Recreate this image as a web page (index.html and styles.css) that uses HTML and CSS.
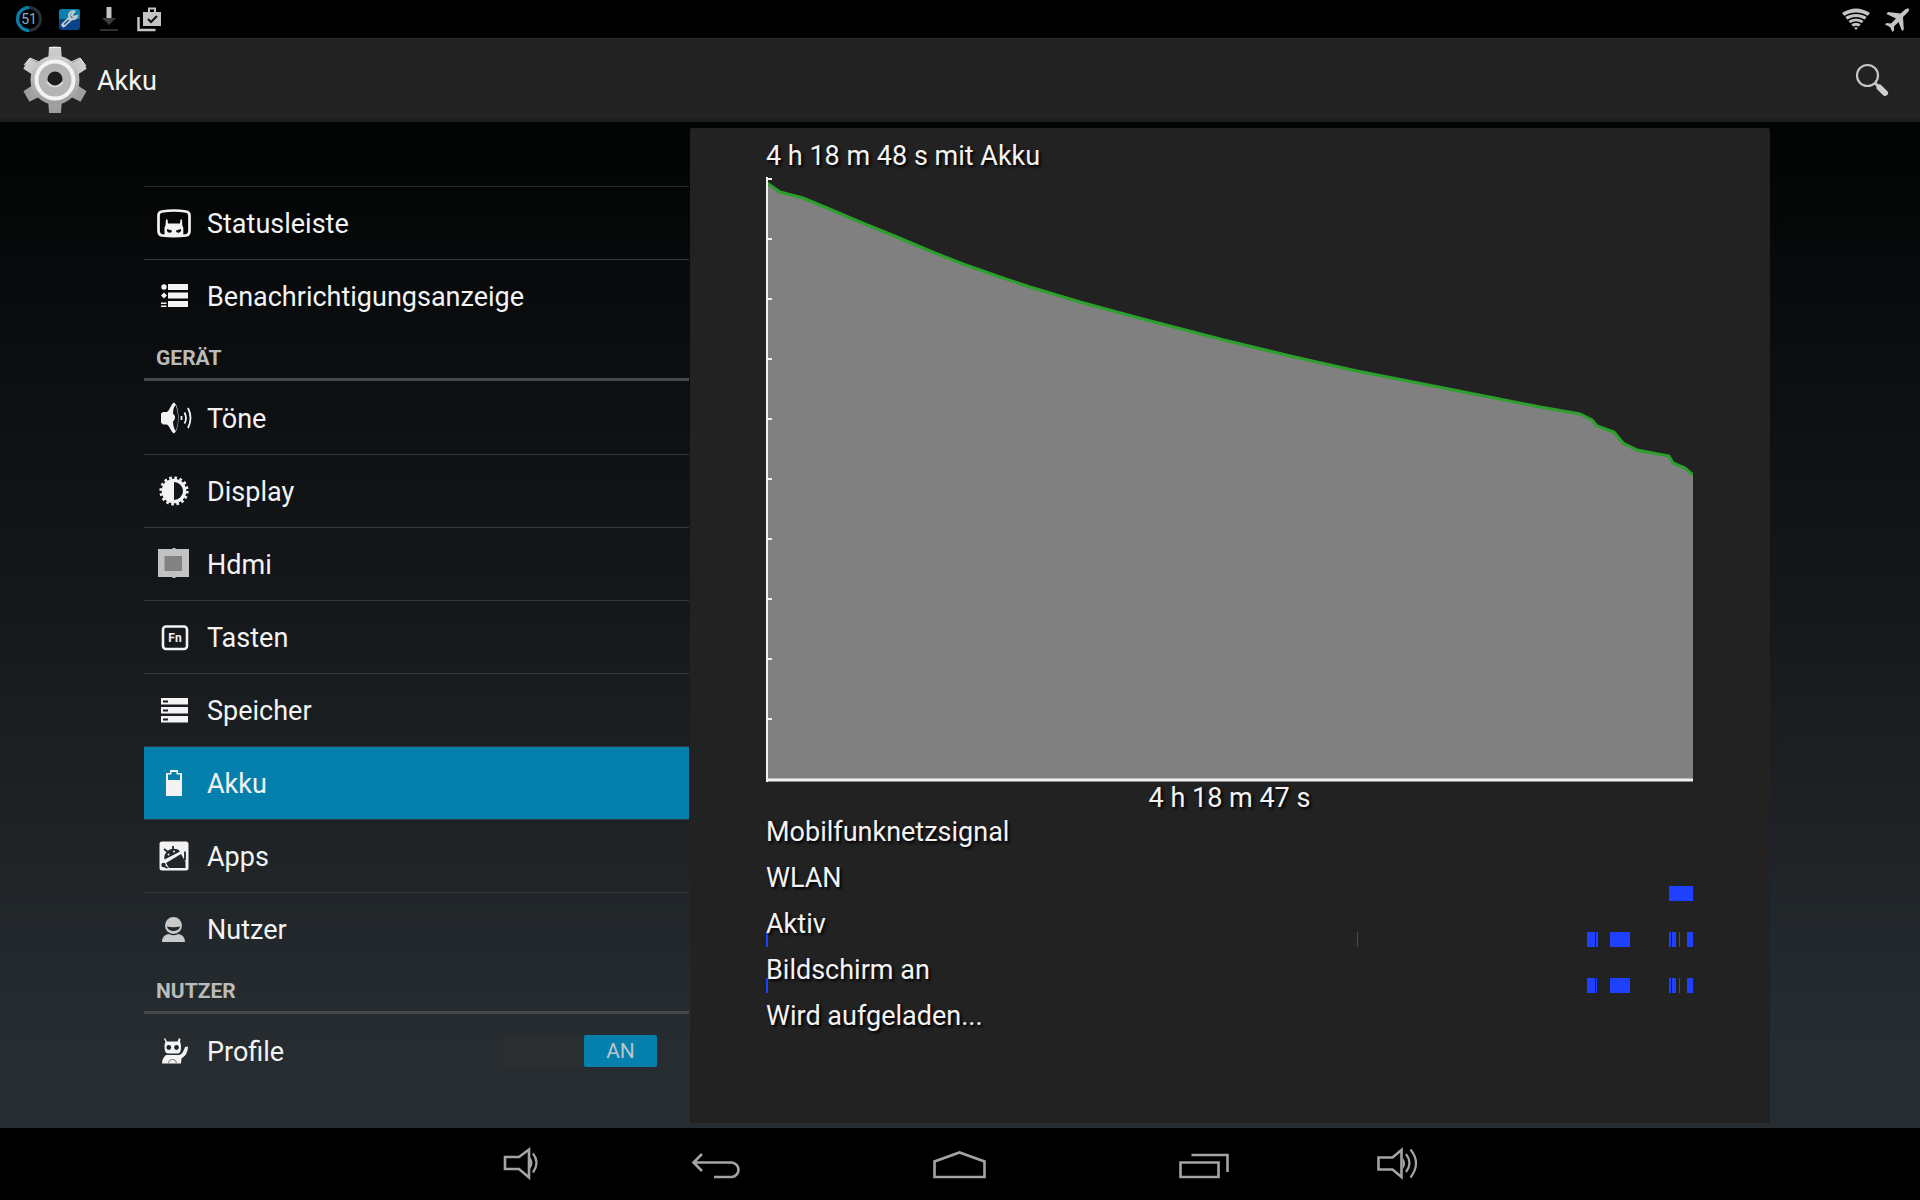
FILE: index.html
```html
<!DOCTYPE html>
<html lang="de">
<head>
<meta charset="utf-8">
<meta name="viewport" content="width=device-width, initial-scale=1">
<title>Akku</title>
<link rel="stylesheet" href="styles.css">
</head>
<body>
<div class="statusbar">
  <div class="status-group">
    <svg class="status-icon" viewBox="0 0 28 28"><circle cx="14" cy="14" r="11.500" fill="none" stroke="#2a3036" stroke-width="3"/><path d="M14 2.500A11.500 11.500 0 0 0 14 25.500" fill="none" stroke="#0580ad" stroke-width="3"/><text class="battery-level" x="14" y="19" text-anchor="middle">51</text></svg>
    <svg class="status-icon" viewBox="0 0 28 28"><rect x="4" y="4" width="21" height="21" rx="3" fill="#07448a"/><path d="M4 14V7a3 3 0 0 1 3-3h15a3 3 0 0 1 3 3v7z" fill="#0a80ae"/><path d="M8.500 20l8-7.500" stroke="#c8c8c8" stroke-width="4.500" stroke-linecap="round"/><path d="M19.500 6.500a4 4 0 1 0 2.500 4.500l-3.500 1-2-2z" fill="#0a80ae" stroke="#c8c8c8" stroke-width="2"/><path d="M9 19.500l5-4.500" stroke="#0a5a96" stroke-width="1.500"/></svg>
    <svg class="status-icon" viewBox="0 0 28 28"><path d="M11.500 2h5v11h-5z" fill="#c4c4c4"/><path d="M7 13h14l-7 7z" fill="#3a3d40"/><path d="M5 24h18v2H5z" fill="#2d3032"/></svg>
    <svg class="status-icon" viewBox="0 0 28 28"><path d="M3.500 12v13h17" fill="none" stroke="#c4c4c4" stroke-width="2.500"/><path d="M8 7h18v14H8z" fill="#c4c4c4"/><path d="M14 7V3.500h6V7" fill="none" stroke="#c4c4c4" stroke-width="2"/><path d="M13 14l3 3 6-6" fill="none" stroke="#111" stroke-width="2"/></svg>
  </div>
  <div class="status-group status-group-end">
    <svg class="status-icon" viewBox="0 0 28 28"><path d="M14 25L0 8Q14-1 28 8z" fill="#c4c4c4"/><path d="M1 12.500Q14 4 27 12.500M4 16.500Q14 9 24 16.500M7 20Q14 14 21 20M10 23Q14 20 18 23" fill="none" stroke="#000" stroke-width="1.500"/></svg>
    <svg class="status-icon" viewBox="0 0 28 28"><path d="M25 4c-1.500-1-3.500 0-5 1.500l-3.500 3L4 7 2.500 9l9.500 4.500-5 5-4.500-.5L1 19.500l5 2.500 2.500 5 1.500-1.500v-4l4.500-4.500L18 26l1.800-1.500L19 12l4-4c1.500-1.500 2.500-3 2-4z" fill="#c4c4c4"/></svg>
  </div>
</div>

<header class="actionbar">
  <svg class="gear" viewBox="0 0 66 68" aria-hidden="true">
    <defs><linearGradient id="metal" x1="0" y1="0" x2="0" y2="1"><stop offset="0" stop-color="#cfcfcf"/><stop offset="1" stop-color="#9c9c9c"/></linearGradient></defs>
    <g fill="url(#metal)">
      <path id="tooth" d="M26 16l1-15q6-1 12 0l1 15v36l-1 15H27l-1-15z"/>
      <use href="#tooth" transform="rotate(60 33 34)"/>
      <use href="#tooth" transform="rotate(-60 33 34)"/>
      <circle cx="33" cy="34" r="24.500"/>
    </g>
    <path d="M27 1.500h12M2 19l6-7 9 4M49 16l9-4 6 8" fill="none" stroke="#f2f2f2"/>
    <circle cx="33" cy="34" r="18.500" fill="#b4b4b4" stroke="#f3f3f3" stroke-width="4"/>
    <circle cx="33" cy="33" r="7.500" fill="#1d1d1d"/><path d="M25 36q8 9 16 0" fill="none" stroke="#d8d8d8" stroke-width="2"/>
  </svg>
  <h1 class="title">Akku</h1>
  <button class="search" type="button" aria-label="Suchen">
    <svg class="search-icon" viewBox="0 0 36 36"><circle cx="13.500" cy="13.500" r="10.500" fill="none" stroke="#c6c6c6" stroke-width="2.200"/><path d="M21 21l5 5" stroke="#c6c6c6" stroke-width="3"/><path d="M25.500 25.500l5.500 5.500" stroke="#cecece" stroke-width="6" stroke-linecap="round"/></svg>
  </button>
</header>

<main class="content">
  <nav class="sidebar" aria-label="Einstellungen">
    <ul class="menu menu-first">
      <li><a class="item" href="#statusleiste"><svg class="icon" viewBox="0 0 36 36"><path d="M6 6.500q12-2 24 0 3.500.5 3.500 4v15.500q0 4-3.500 4.500-12 1.500-24 0-3.500-.5-3.500-4.500V10.500q0-3.500 3.500-4z" fill="none" stroke="#f3f3f3" stroke-width="2.700"/><path d="M10 14.500h1.500l.5 4h12l.5-4H26l.3 6 1 2V32H8.500v-9.500l1-2z" fill="#f3f3f3"/><path d="M11 24l5 1.500c0 3-4.500 3-5 0zM25 24l-5 1.500c0 3 4.500 3 5 0z" fill="#0a0b0d"/></svg>Statusleiste</a></li>
      <li><a class="item" href="#benachrichtigungsanzeige"><svg class="icon" viewBox="0 0 36 36"><path d="M12 6h20v6H12zM12 14.500h20v6H12zM12 23h20v6H12zM5 24.500h5.500V26H5zM5 27.500h5.500V29H5zM8 14.500l3 3-3 3-3-3z" fill="#f3f3f3"/><circle cx="8" cy="9" r="2.700" fill="#f3f3f3"/></svg>Benachrichtigungsanzeige</a></li>
    </ul>
    <h2 class="section">GERÄT</h2>
    <ul class="menu">
      <li><a class="item" href="#toene"><svg class="icon" viewBox="0 0 36 36"><path d="M5 13.500l2-1.500h4c3-2 4-8 7-9.500 6 4 6 27 0 31-3-1.500-4-7-7-9H7l-2-2z" fill="#f3f3f3"/><path d="M19.500 5c3.500 7 3.500 20 0 26-2-3-2.500-7-2.500-9.500q4-4 0-8c0-3 .5-6 2.500-8.500z" fill="#111417"/><path d="M25.500 16v4M28.500 12.500q3 6 0 11M32 8q5 10 0 20" fill="none" stroke="#f3f3f3" stroke-width="1.800"/></svg>Töne</a></li>
      <li><a class="item" href="#display"><svg class="icon" viewBox="0 0 36 36"><circle cx="18" cy="18" r="12.300" fill="#f3f3f3"/><circle cx="18" cy="18" r="13.200" fill="none" stroke="#f3f3f3" stroke-width="2.800" stroke-dasharray="2.600 2.584"/><path d="M18 9a9 9 0 0 1 0 18z" fill="#13171a"/></svg>Display</a></li>
      <li><a class="item" href="#hdmi"><svg class="icon" viewBox="0 0 36 36"><path d="M2 3h31v28H2zM16.500 2h3v30h-3z" fill="#c2c2c2"/><path d="M8.500 10H26v15H8.500z" fill="#828282"/></svg>Hdmi</a></li>
      <li><a class="item" href="#tasten"><svg class="icon" viewBox="0 0 36 36"><rect x="7" y="7.500" width="24" height="22.500" rx="3" fill="none" stroke="#f3f3f3" stroke-width="2.600"/><text class="fn" x="19" y="23" text-anchor="middle">Fn</text></svg>Tasten</a></li>
      <li><a class="item" href="#speicher"><svg class="icon" viewBox="0 0 36 36"><path d="M5 6h27v6.500H5zM5 15h27v6.500H5zM5 24h27v6.500H5z" fill="#f3f3f3"/><path d="M7 9.500h5M7 18.500h5M7 27.500h5" stroke="#1a1e21" stroke-width="1.800"/></svg>Speicher</a></li>
      <li><a class="item item-active" href="#akku" aria-current="page"><svg class="icon" viewBox="0 0 36 36"><path d="M10 31V8h4V5h8v3h4v23z" fill="#f3f3f3"/><path d="M12 15V9.500h3.500V7h5v2.500H24V15z" fill="#0580ad"/></svg>Akku</a></li>
      <li><a class="item" href="#apps"><svg class="icon" viewBox="0 0 36 36"><rect x="3.500" y="3.500" width="29" height="29" rx="2.500" fill="#f3f3f3"/><path d="M8.500 21.500C7 14 15 8.500 22 11.500l2 2zM10 25L25 16l4.500 8v6H13z" fill="#20262a"/><path d="M17 11V8M12 14l-4-3M29 13.500v9" stroke="#20262a" stroke-width="1.800"/><circle cx="7.500" cy="27" r="2.200" fill="#20262a"/><path d="M8 28l3.500 2" stroke="#20262a" stroke-width="2"/><circle cx="12.500" cy="16.500" r="1" fill="#f3f3f3"/><circle cx="18" cy="13.500" r="1" fill="#f3f3f3"/></svg>Apps</a></li>
      <li><a class="item" href="#nutzer"><svg class="icon" viewBox="0 0 36 36"><circle cx="17.500" cy="14.500" r="8.500" fill="#c9c9c9"/><path d="M11 15.500q6.500 1.500 13 0c-1 6-12 6-13 0z" fill="#22282c"/><path d="M6 31c0-5 3-7.500 7-8q4.500 2.500 9 0c4 .5 7 3 7 8z" fill="#c9c9c9"/></svg>Nutzer</a></li>
    </ul>
    <h2 class="section">NUTZER</h2>
    <ul class="menu">
      <li class="switch-row"><a class="item" href="#profile"><svg class="icon" viewBox="0 0 36 36"><path d="M9 5l2 3.500h10.500L23 5l1.500 1-.5 3q1 1 1 5 0 6-3 6.500H12q-3.500 0-3.500-6.500 0-4 1-5L8 6z" fill="#f3f3f3"/><circle cx="12.800" cy="14.500" r="2.400" fill="#22272b"/><circle cx="20.500" cy="14.500" r="2.400" fill="#22272b"/><path d="M10 22h13q4-1 6-8l3-.5q0 8-6.500 12L25 30.500H6q0-5.500 4-8.500z" fill="#f3f3f3"/><path d="M12.500 30q1-3.500 4-3.500t4 3.500" fill="none" stroke="#888" stroke-width="1.200"/></svg>Profile</a>
        <label class="switch"><input class="switch-input" type="checkbox" checked aria-label="Profile"><span class="switch-thumb">AN</span></label></li>
    </ul>
  </nav>

  <section class="panel">
    <h2 class="label">4 h 18 m 48 s mit Akku</h2>
    <svg class="chart" viewBox="0 0 927 605" preserveAspectRatio="none" role="img" aria-label="Akkustand">
      <path d="M1 6L14 15 37 21 61 31 94 45 131 60 164 74 197 87 231 99 264 110 314 125 373 141 458 163 524 179 591 194 703 216 774 230 814 237 826 243 831 249 848 255 857 266 871 273 903 279 907 286 919 291 927 298V602H1z" fill="#808080"/>
      <path d="M1 6L14 15 37 21 61 31 94 45 131 60 164 74 197 87 231 99 264 110 314 125 373 141 458 163 524 179 591 194 703 216 774 230 814 237 826 243 831 249 848 255 857 266 871 273 903 279 907 286 919 291 927 298" fill="none" stroke="#2ca02c" stroke-width="3"/>
      <path d="M1 0V605M0 2H6M0 62H6M0 122H6M0 182H6M0 242H6M0 302H6M0 362H6M0 422H6M0 482H6M0 542H6" stroke="#f0f0f0" stroke-width="2"/>
      <path d="M0 603H927" stroke="#f0f0f0" stroke-width="3"/>
    </svg>
    <p class="label duration">4 h 18 m 47 s</p>
    <ul class="events">
      <li class="event"><span class="label">Mobilfunknetzsignal</span></li>
      <li class="event"><span class="label">WLAN</span><svg class="bars" viewBox="0 0 927 15" preserveAspectRatio="none"><path d="M903 0h24v15h-24z"/></svg></li>
      <li class="event"><span class="label">Aktiv</span><svg class="bars" viewBox="0 0 927 15" preserveAspectRatio="none"><path d="M0 0h2v15H0zM591 0h1v15h-1zM821 0h8v15h-8zM830 0h2v15h-2zM844 0h20v15h-20zM903 0h2v15h-2zM906 0h4v15h-4zM913 0h1v15h-1zM921 0h6v15h-6z"/></svg></li>
      <li class="event"><span class="label">Bildschirm an</span><svg class="bars" viewBox="0 0 927 15" preserveAspectRatio="none"><path d="M0 0h2v15H0zM821 0h8v15h-8zM830 0h1v15h-1zM844 0h20v15h-20zM903 0h2v15h-2zM906 0h4v15h-4zM913 0h1v15h-1zM921 0h6v15h-6z"/></svg></li>
      <li class="event"><span class="label">Wird aufgeladen...</span></li>
    </ul>
  </section>
</main>

<footer class="navbar">
  <button class="nav-button nav-volume" type="button" aria-label="Leiser"><svg class="nav-icon" viewBox="0 0 54 36"><path d="M10 11h14l10-7.500v28L24 23H10z" fill="none" stroke="#a4a4a6" stroke-width="2.600"/><path d="M35 11q5 6 0 12z" fill="#a4a4a6"/><path d="M38 7.500q7 9 0 19" fill="none" stroke="#a4a4a6" stroke-width="2.200"/></svg></button>
  <button class="nav-button" type="button" aria-label="Zurück"><svg class="nav-icon" viewBox="0 0 54 36"><path d="M5 16.500h38a7.300 7.300 0 0 1 0 14.500H25M13 8l-8.500 8.500L13 25" fill="none" stroke="#a4a4a6" stroke-width="2.600"/></svg></button>
  <button class="nav-button" type="button" aria-label="Startseite"><svg class="nav-icon" viewBox="0 0 54 36"><path d="M1.500 31V15.500L26.500 6.500l25 9V31z" fill="none" stroke="#a4a4a6" stroke-width="2.600"/></svg></button>
  <button class="nav-button" type="button" aria-label="Letzte Apps"><svg class="nav-icon" viewBox="0 0 54 36"><path d="M3.500 16.500h38V31h-38zM14.500 9h36v17" fill="none" stroke="#a4a4a6" stroke-width="2.600"/></svg></button>
  <button class="nav-button nav-volume" type="button" aria-label="Lauter"><svg class="nav-icon" viewBox="0 0 54 36"><path d="M7.500 11.500h14l9-7.500v27l-9-7.500h-14z" fill="none" stroke="#a4a4a6" stroke-width="2.600"/><path d="M32 12q4 5.500 0 11z" fill="#a4a4a6"/><path d="M35 8q7 9 0 18M39.500 3.500q11 13.500 0 28" fill="none" stroke="#a4a4a6" stroke-width="2.200"/></svg></button>
</footer>
</body>
</html>
```
FILE: styles.css
```css
* {
  box-sizing: border-box;
}

body {
  margin: 0;
  min-height: 100vh;
  display: flex;
  flex-direction: column;
  background: #000;
  color: #f3f3f3;
  font-family: Roboto, "Noto Sans", sans-serif;
  font-size: 27px;
  line-height: 32px;
}

h1,
h2,
p,
ul {
  margin: 0;
  padding: 0;
  font-size: 27px;
  font-weight: 400;
}

ul {
  list-style: none;
}

button {
  padding: 0;
  border: 0;
  background: none;
  cursor: pointer;
}

svg {
  display: block;
  flex: none;
}

/* Status bar */
.statusbar {
  display: flex;
  justify-content: space-between;
  align-items: center;
  height: 38px;
  padding: 0 8px 0 15px;
}

.status-group {
  display: flex;
  gap: 12px;
}

.status-group-end {
  gap: 14px;
}

.status-icon {
  width: 28px;
  height: 28px;
}

.battery-level {
  font-size: 14px;
  fill: #7fb4d0;
}

/* Action bar */
.actionbar {
  display: flex;
  align-items: center;
  height: 84px;
  padding: 2px 30px 0 22px;
  background: #222;
  border-top: 1px solid #262c31;
  border-bottom: 3px solid #191e22;
}

.gear {
  width: 66px;
  height: 68px;
}

.title {
  flex: 1;
  padding: 2px 0 0 9px;
}

.search-icon {
  width: 36px;
  height: 36px;
}

/* Two-column body */
.content {
  flex: 1;
  display: grid;
  grid-template-columns: minmax(0, 546fr) minmax(0, 1080fr);
  padding: 0 150px 0 144px;
  background: linear-gradient(#020303, #0c0e10 25%, #16191c 50%, #22272b 80%, #272c30 92%);
}

.sidebar {
  padding: 64px 1px 0 0;
}

.menu-first {
  border-top: 1px solid #262b2f;
}

.menu li + li {
  border-top: 1px solid #34393d;
}

.item {
  flex: 1;
  display: flex;
  align-items: center;
  gap: 15px;
  height: 72px;
  padding: 2px 12px 0;
  color: #f3f3f3;
  text-decoration: none;
}

.item-active {
  background: #0580ad;
}

.icon {
  width: 36px;
  height: 36px;
  margin-bottom: 2px;
}

.fn {
  font-size: 12px;
  font-weight: 700;
  fill: #f3f3f3;
}

.section {
  height: 49px;
  margin-bottom: 1px;
  padding: 10px 12px 0;
  border-bottom: 3px solid #45494c;
  color: #bbb;
  font-size: 21px;
  font-weight: 700;
}

.switch-row {
  display: flex;
  align-items: center;
}

.switch {
  position: relative;
  display: flex;
  justify-content: flex-end;
  width: 152px;
  margin-right: 32px;
  background: #2a2e31;
  cursor: pointer;
}

.switch-input {
  position: absolute;
  inset: 0;
  margin: 0;
  appearance: none;
}

.switch-thumb {
  width: 73px;
  border-radius: 2px;
  background: #0580ad;
  color: #bcc4c8;
  font-size: 21px;
  text-align: center;
}

/* Battery panel */
.panel {
  margin: 6px 0 5px;
  padding: 12px 77px 0 76px;
  background: #222;
  border-radius: 2px;
}

.label {
  text-shadow: 2px 2px 3px #000;
}

.chart {
  width: 100%;
  height: 605px;
  margin-top: 5px;
}

.duration {
  text-align: center;
}

.events {
  padding-top: 2px;
}

.event {
  display: grid;
  height: 46px;
}

.event > * {
  grid-area: 1 / 1;
}

.event .label {
  z-index: 1;
}

.bars {
  width: 100%;
  height: 15px;
  margin-top: 24px;
  fill: #2040ff;
}

/* Navigation bar */
.navbar {
  display: flex;
  justify-content: center;
  height: 72px;
}

.nav-button {
  display: flex;
  justify-content: center;
  align-items: center;
  width: 244px;
}

.nav-volume {
  width: 144px;
}

.nav-icon {
  width: 54px;
  height: 36px;
}
```
